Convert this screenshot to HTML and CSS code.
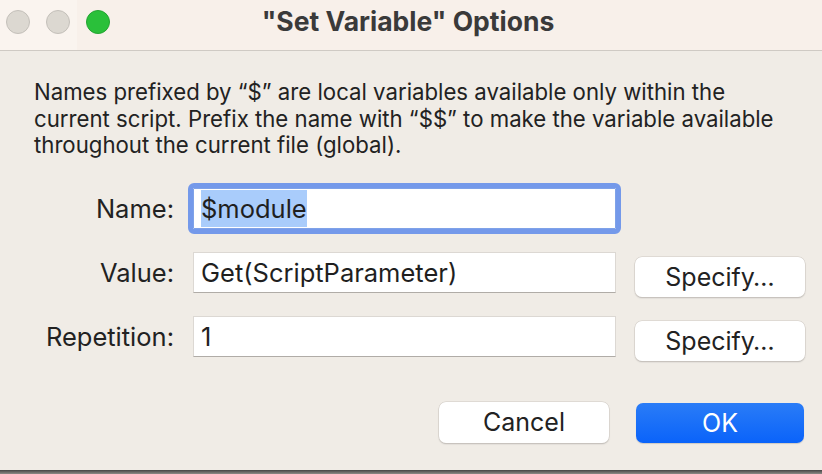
FILE: index.html
```html
<!DOCTYPE html>
<html>
<head>
<meta charset="utf-8">
<link rel="stylesheet" href="styles.css">
</head>
<body>
<div class="window">
  <div class="titlebar">
    <div class="lights">
      <span class="light grey"></span>
      <span class="light grey"></span>
      <span class="light green"></span>
    </div>
    <div class="title">"Set Variable" Options</div>
  </div>
  <div class="content">
    <p class="desc">Names prefixed by “$” are local variables available only within the current script. Prefix the name with “$$” to make the variable available throughout the current file (global).</p>
    <div class="form">
      <label class="lbl">Name:</label>
      <div class="field focus"><span class="sel">$module</span></div>
      <div></div>
      <label class="lbl">Value:</label>
      <div class="field">Get(ScriptParameter)</div>
      <button class="btn spec">Specify…</button>
      <label class="lbl">Repetition:</label>
      <div class="field">1</div>
      <button class="btn spec">Specify…</button>
    </div>
    <div class="actions">
      <button class="btn cancel">Cancel</button>
      <button class="btn ok">OK</button>
    </div>
  </div>
</div>
<div class="behind"></div>
</body>
</html>
```
FILE: styles.css
```css
html, body {
  margin: 0;
  padding: 0;
  width: 822px;
  height: 474px;
  overflow: hidden;
  background: #f0ece6;
  font-family: "Inter", "Liberation Sans", sans-serif;
  color: #1f1f1f;
}
.window {
  height: 470px;
  background: #f0ece6;
  display: flex;
  flex-direction: column;
  border-bottom-right-radius: 12px;
  border-bottom-left-radius: 4px;
}
.titlebar {
  height: 50px;
  flex-shrink: 0;
  background: linear-gradient(90deg, #faf4ef 0, #faf4ef 77px, #f8f0ea 77px);
  border-bottom: 1px solid #cfcac4;
  display: flex;
  align-items: center;
  position: relative;
}
.lights {
  display: flex;
  gap: 16px;
  padding-left: 6px;
  margin-top: -6px;
}
.light {
  flex-shrink: 0;
  width: 24px;
  height: 24px;
  border-radius: 50%;
  box-sizing: border-box;
}
.light.grey { background: #dcd8d1; border: 1px solid #c4c0ba; }
.light.green { background: #2ac03a; border: 1px solid #24a432; }
.title {
  position: absolute;
  left: 0;
  right: 6px;
  top: 5px;
  text-align: center;
  font-size: 26.5px;
  font-weight: 700;
  color: #3a3a3a;
  pointer-events: none;
}
.content {
  padding: 0 17px 0 34px;
  flex: 1;
  display: flex;
  flex-direction: column;
}
.desc {
  margin: 28px 0 0;
  font-size: 22.2px;
  line-height: 26.5px;
  color: #222;
  width: 760px;
}
.form {
  margin-top: 29px;
  display: grid;
  grid-template-columns: 140px 423px 170px;
  grid-auto-rows: 41px;
  column-gap: 19px;
  row-gap: 23px;
  align-items: start;
}
.lbl {
  text-align: right;
  font-size: 25.5px;
  line-height: 41px;
  color: #222;
}
.field {
  height: 41px;
  background: #fff;
  box-sizing: border-box;
  border: 1px solid #dcd8d3;
  border-bottom-color: #b0aca7;
  font-size: 25.5px;
  line-height: 39px;
  padding-left: 7px;
  color: #1f1f1f;
}
.field.focus {
  border: 1px solid #7fa2e8;
  outline: 5px solid #7499ea;
  outline-offset: 0;
  border-radius: 1px;
}
.sel {
  background: #a9ccfb;
  padding: 3px 0;
}
.btn {
  font-family: "Inter", "Liberation Sans", sans-serif;
  font-size: 25px;
  color: #222;
  background: #fff;
  border: none;
  border-radius: 7px;
  height: 41px;
  box-shadow: 0 0 0 0.5px #cfc9c3, 0 1px 1.5px rgba(0,0,0,0.25);
  padding: 0;
}
.btn.spec {
  width: 170px;
  height: 40px;
  margin-top: 5px;
}
.actions {
  margin-top: 45px;
  display: flex;
  justify-content: flex-end;
  align-items: flex-start;
  gap: 27px;
}
.btn.cancel { width: 170px; }
.btn.ok {
  width: 168px;
  height: 40px;
  margin-top: 1px;
  margin-right: 1px;
  background: linear-gradient(#2a7cf7, #0a63fa);
  color: #fff;
  box-shadow: 0 1px 1px rgba(0,0,0,0.15);
}
.behind {
  height: 4px;
  background: linear-gradient(#444, #8c8a86);
}
```
